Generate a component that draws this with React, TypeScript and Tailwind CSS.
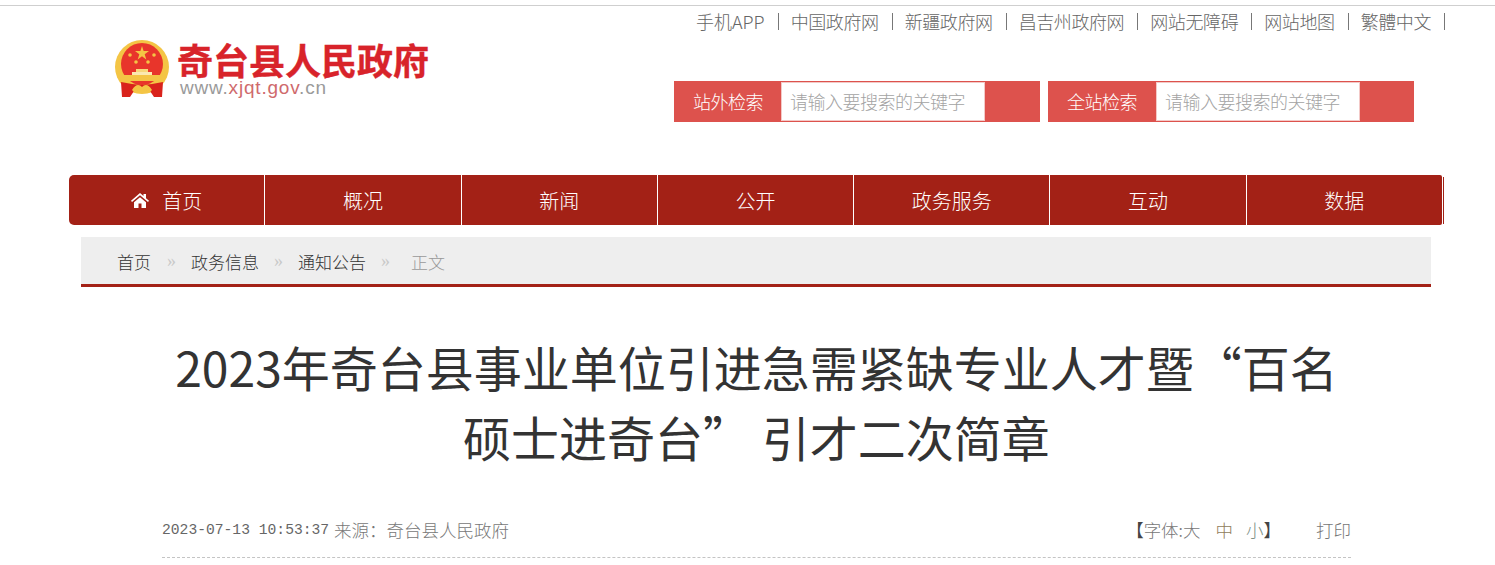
const cjk = "font-['Noto_Sans_CJK_SC',sans-serif]";

const topLinks = ["手机APP", "中国政府网", "新疆政府网", "昌吉州政府网", "网站无障碍", "网站地图", "繁體中文"];
const navItems = ["首页", "概况", "新闻", "公开", "政务服务", "互动", "数据"];
const crumbs = ["首页", "政务信息", "通知公告"];

function Emblem() {
    return (
        <svg width="56" height="58" viewBox="0 0 56 58" className="shrink-0">
            <circle cx="27" cy="27" r="27" fill="#f4c545" />
            <circle cx="27" cy="24" r="21" fill="#e8352b" />
            <polygon points="27,6 28.6,11 34,11 29.7,14.2 31.3,19.4 27,16.2 22.7,19.4 24.3,14.2 20,11 25.4,11" fill="#f4c545" />
            <circle cx="15" cy="15" r="1.8" fill="#f4c545" />
            <circle cx="39" cy="15" r="1.8" fill="#f4c545" />
            <circle cx="21" cy="22" r="1.8" fill="#f4c545" />
            <circle cx="33" cy="22" r="1.8" fill="#f4c545" />
            <rect x="21" y="29" width="12" height="3" fill="#f8d87a" />
            <rect x="17" y="32" width="20" height="3" fill="#fbe9b0" />
            <rect x="9" y="35" width="36" height="6" fill="#f4c545" />
            <path d="M6 42 L17 44 L27 45 L37 44 L48 42 L47 57 L39 57 L35 51 L27 49 L19 51 L15 57 L7 57 Z" fill="#d9231c" />
            <path d="M17 50 Q22 42 27 47 Q32 42 37 50 L34 53 Q30 48 27 52 Q24 48 20 53 Z" fill="#f4c545" />
        </svg>
    );
}

function SearchBox({ label, inputClass }: { label: string; inputClass?: string }) {
    return (
        <div className="flex h-[41px] w-[366px] items-center bg-[#dd524d] pl-[12px]">
            <span className="w-[95px] pl-[7px] text-[18px] font-light tracking-[-0.5px] text-white">{label}</span>
            <div className={`flex h-[39px] w-[204px] items-center border border-[#f3c9c7] bg-white pl-[8px] text-[18px] font-light tracking-[-0.5px] text-[#a3a3a3] ${inputClass ?? ""}`}>
                请输入要搜索的关键字
            </div>
        </div>
    );
}

export default function App() {
    return (
        <div className={`h-[565px] w-[1495px] overflow-hidden bg-white ${cjk}`}>
            <div className="h-[6px] border-b border-[#cfcfcf]" />

            <header className="flex h-[169px]">
                <div className="ml-[115px] mt-[34px] flex w-[559px] items-start">
                    <Emblem />
                    <div className="ml-[6px] flex flex-col">
                        <span className="whitespace-nowrap text-[36px] font-bold leading-[38px] text-[#d8232a] [-webkit-text-stroke:0.4px_#d8232a]">奇台县人民政府</span>
                        <span className="font-['Liberation_Sans',sans-serif] ml-[3px] whitespace-nowrap text-[19px] leading-[19px] tracking-[0.8px] text-[#9a9a9a]">
                            www.<span className="text-[#cf6a6c]">xjqt.gov</span>.cn
                        </span>
                    </div>
                </div>
                <div className="flex flex-1 flex-col">
                    <div className="mt-[2px] flex h-[26px] items-center pl-[22px] text-[18px] font-light tracking-[-0.4px] text-[#666]">
                        {topLinks.map((link, i) => (
                            <span key={link} className={`flex items-center whitespace-nowrap ${i === 0 ? "tracking-[0px]" : ""}`}>
                                {link}
                                <span className="ml-[13px] mr-[12px] h-[17px] w-[1px] bg-[#777]" />
                            </span>
                        ))}
                    </div>
                    <div className="mt-[47px] flex gap-[8px]">
                        <SearchBox label="站外检索" />
                        <SearchBox label="全站检索" inputClass="ml-[1px]" />
                    </div>
                </div>
            </header>

            <div className="ml-[69px] flex h-[50px] w-[1375px] items-center">
                <nav className="flex h-full w-[1373px] overflow-hidden rounded-l-[5px] rounded-r-[2px] bg-[#a32116]">
                    {navItems.map((item, i) => (
                        <div
                            key={item}
                            className={`flex h-full flex-1 items-center justify-center gap-[13px] pt-[1px] text-[20px] font-light text-white ${i < 6 ? "border-r border-white" : ""}`}
                        >
                            {i === 0 && (
                                <svg width="18" height="15" viewBox="0 0 18 15" fill="white">
                                    <path d="M9 0 L12.5 3 V1 H15 V5.2 L18 7.8 L17 9 L9 2.2 L1 9 L0 7.8 Z" />
                                    <path d="M3 9.2 L9 4.2 L15 9.2 V15 H10.5 V10.5 H7.5 V15 H3 Z" />
                                </svg>
                            )}
                            {item}
                        </div>
                    ))}
                </nav>
                <div className="ml-[1px] h-[47px] w-[1px] bg-[#a32116]" />
            </div>

            <div className="ml-[81px] mt-[12px] flex h-[50px] w-[1350px] items-center border-b-[3px] border-[#a32116] bg-[#eeeeee] pl-[36px] pt-[2px] text-[17px] font-light text-[#333]">
                {crumbs.map((crumb, i) => (
                    <span key={crumb} className="flex items-center">
                        {crumb}
                        <span className={`w-[39px] text-center font-['Liberation_Serif',serif] text-[18px] text-[#c9c9c9] ${i === 0 ? "ml-[1px]" : ""}`}>»</span>
                    </span>
                ))}
                <span className="ml-[6px] text-[#999]">正文</span>
            </div>

            <main className="ml-[162px] w-[1189px]">
                <h1 className="mt-[44px] text-center text-[48px] font-normal leading-[70px] text-[#333]">
                    2023年奇台县事业单位引进急需紧缺专业人才暨“百名
                    <br />
                    硕士进奇台” 引才二次简章
                </h1>
                <div className="mt-[41px] flex h-[46px] items-start justify-between border-b border-dashed border-[#c4c4c4] pt-[5px] text-[17.5px] font-light leading-[26px] text-[#777]">
                    <div className="flex items-center">
                        <span className="font-['Liberation_Mono',monospace] text-[14.67px] text-[#666]">2023-07-13 10:53:37</span>
                        <span className="ml-[5px]">来源：奇台县人民政府</span>
                    </div>
                    <div className="flex whitespace-pre">
                        <span className="text-[#444]">【</span>
                        <span>字体:大</span>
                        <span className="ml-[15px] text-[#8f7d5c]">中</span>
                        <span className="ml-[13px] text-[#7d9085]">小</span>
                        <span className="text-[#444]">】</span>
                        <span className="ml-[35px]">打印</span>
                    </div>
                </div>
            </main>
        </div>
    );
}
